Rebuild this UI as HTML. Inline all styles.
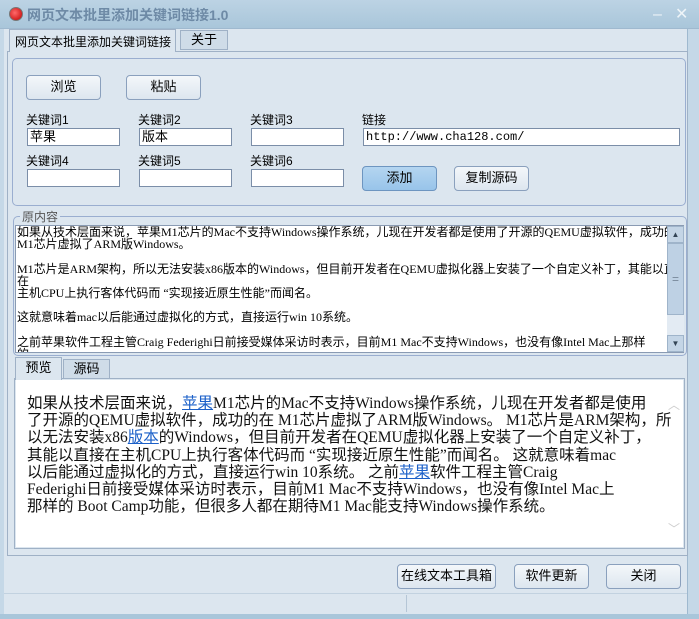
<!DOCTYPE html>
<html><head><meta charset="utf-8"><style>
*{box-sizing:border-box;margin:0;padding:0}
body{width:699px;height:619px;overflow:hidden;background:#dce6ef;font-family:"Liberation Sans","Noto Sans CJK SC",sans-serif;font-size:12px;color:#000;position:relative}
.a{position:absolute}
.btn{position:absolute;border:1px solid #8aa0bd;border-radius:4px;background:linear-gradient(#f4f7fa,#dde6ef);text-align:center;font-size:13px;line-height:22px}
.inp{position:absolute;background:#fff;border:1px solid #7b8ea8;height:18px;font-size:13px;line-height:16px;padding-left:2px}
.lbl{position:absolute;font-size:12px}
.ser{font-family:"Liberation Serif","Noto Sans CJK SC",serif}
.mono{font-family:"Liberation Mono","Noto Sans CJK SC",monospace}
.l{white-space:nowrap}
</style></head><body>
<div class="a" style="left:0;top:0;width:699px;height:29px;background:linear-gradient(#bcd3e4,#a9c6da);border-bottom:1px solid #9fb9cf"></div>
<div class="a" style="left:9px;top:7px;width:14px;height:14px;border-radius:50%;background:radial-gradient(circle at 40% 40%,#ff6a6a,#c00000);border:1px solid #777"></div>
<div class="a" style="left:27px;top:5px;font-size:14px;font-weight:bold;color:#6e8aa6">网页文本批里添加关键词链接1.0</div>
<div class="a" style="left:653px;top:6px;color:#eef4f8;font-size:16px">–</div>
<div class="a" style="left:675px;top:4px;color:#eef4f8;font-size:16px">✕</div>
<div class="a" style="left:687px;top:29px;width:12px;height:590px;background:#c5d8e7;border-left:1px solid #9fb9cf"></div>
<div class="a" style="left:0;top:29px;width:4px;height:590px;background:#c5d8e7"></div>
<div class="a l" style="left:9px;top:29px;width:167px;height:23px;background:#dce6ef;border:1px solid #9fb1c6;border-bottom:none;font-size:12px;padding:3px 0 0 5px;z-index:2">网页文本批里添加关键词链接</div>
<div class="a" style="left:180px;top:30px;width:48px;height:20px;background:#cfdce8;border:1px solid #9fb1c6;text-align:center;font-size:13px;line-height:18px">关于</div>
<div class="a" style="left:7px;top:51px;width:681px;height:505px;border:1px solid #9fb1c6"></div>
<div class="a" style="left:12px;top:58px;width:674px;height:148px;border:1px solid #9aaed0;border-radius:5px"></div>
<div class="btn" style="left:26px;top:75px;width:75px;height:25px">浏览</div>
<div class="btn" style="left:126px;top:75px;width:75px;height:25px">粘贴</div>
<div class="lbl" style="left:26px;top:111px">关键词1</div>
<div class="lbl" style="left:138px;top:111px">关键词2</div>
<div class="lbl" style="left:250px;top:111px">关键词3</div>
<div class="lbl" style="left:362px;top:111px">链接</div>
<div class="inp" style="left:27px;top:128px;width:93px">苹果</div>
<div class="inp" style="left:139px;top:128px;width:93px">版本</div>
<div class="inp" style="left:251px;top:128px;width:93px"></div>
<div class="inp mono" style="left:363px;top:128px;width:317px;font-size:12px">http://www.cha128.com/</div>
<div class="lbl" style="left:26px;top:152px">关键词4</div>
<div class="lbl" style="left:138px;top:152px">关键词5</div>
<div class="lbl" style="left:250px;top:152px">关键词6</div>
<div class="inp" style="left:27px;top:169px;width:93px"></div>
<div class="inp" style="left:139px;top:169px;width:93px"></div>
<div class="inp" style="left:251px;top:169px;width:93px"></div>
<div class="btn" style="left:362px;top:166px;width:75px;height:25px;background:linear-gradient(#b4d5f0,#98c4ea);border-color:#6d95c0">添加</div>
<div class="btn" style="left:454px;top:166px;width:75px;height:25px">复制源码</div>
<div class="a" style="left:13px;top:216px;width:674px;height:140px;border:1px solid #9aaed0;border-radius:5px"></div>
<div class="a" style="left:20px;top:208px;background:#dce6ef;padding:0 2px;color:#555;font-size:12px">原内容</div>
<div class="a" style="left:15px;top:225px;width:669px;height:128px;background:#fff;border:1px solid #8a9bb3;overflow:hidden"></div>
<div class="a ser" style="left:17px;top:226px;width:650px;height:126px;overflow:hidden;font-size:12px;line-height:12.2px">
<div class="l">如果从技术层面来说，苹果M1芯片的Mac不支持Windows操作系统，儿现在开发者都是使用了开源的QEMU虚拟软件，成功的在</div>
<div class="l">M1芯片虚拟了ARM版Windows。</div>
<div class="l">&nbsp;</div>
<div class="l">M1芯片是ARM架构，所以无法安装x86版本的Windows，但目前开发者在QEMU虚拟化器上安装了一个自定义补丁，其能以直接</div>
<div class="l">在</div>
<div class="l">主机CPU上执行客体代码而 “实现接近原生性能”而闻名。</div>
<div class="l">&nbsp;</div>
<div class="l">这就意味着mac以后能通过虚拟化的方式，直接运行win 10系统。</div>
<div class="l">&nbsp;</div>
<div class="l">之前苹果软件工程主管Craig Federighi日前接受媒体采访时表示，目前M1 Mac不支持Windows，也没有像Intel Mac上那样</div>
<div class="l">的</div>
</div>
<div class="a" style="left:667px;top:226px;width:17px;height:126px;background:#e3ebf3"></div>
<div class="a" style="left:667px;top:226px;width:17px;height:17px;background:#c4d5e6;border:1px solid #9fb4ca;font-size:8px;text-align:center;line-height:15px;color:#345">▲</div>
<div class="a" style="left:667px;top:243px;width:17px;height:72px;background:#bed1e4;border:1px solid #9fb4ca;text-align:center;line-height:70px;color:#789">=</div>
<div class="a" style="left:667px;top:335px;width:17px;height:17px;background:#c4d5e6;border:1px solid #9fb4ca;font-size:8px;text-align:center;line-height:15px;color:#345">▼</div>
<div class="a" style="left:15px;top:357px;width:47px;height:23px;background:#dce6ef;border:1px solid #9fb1c6;border-bottom:none;text-align:center;font-size:13px;line-height:20px;z-index:2">预览</div>
<div class="a" style="left:63px;top:359px;width:47px;height:20px;background:#cfdce8;border:1px solid #9fb1c6;text-align:center;font-size:13px;line-height:18px">源码</div>
<div class="a" style="left:14px;top:378px;width:671px;height:171px;border:1px solid #9fb1c6"></div>
<div class="a" style="left:16px;top:380px;width:667px;height:167px;background:#fff"></div>
<div class="a ser" style="left:27px;top:395px;width:640px;font-size:15.5px;line-height:17.2px;color:#111">
<div class="l">如果从技术层面来说，<span style="color:#1a5fc8;text-decoration:underline">苹果</span>M1芯片的Mac不支持Windows操作系统，儿现在开发者都是使用</div>
<div class="l">了开源的QEMU虚拟软件，成功的在 M1芯片虚拟了ARM版Windows。 M1芯片是ARM架构，所</div>
<div class="l">以无法安装x86<span style="color:#1a5fc8;text-decoration:underline">版本</span>的Windows，但目前开发者在QEMU虚拟化器上安装了一个自定义补丁，</div>
<div class="l">其能以直接在主机CPU上执行客体代码而 “实现接近原生性能”而闻名。 这就意味着mac</div>
<div class="l">以后能通过虚拟化的方式，直接运行win 10系统。 之前<span style="color:#1a5fc8;text-decoration:underline">苹果</span>软件工程主管Craig</div>
<div class="l">Federighi日前接受媒体采访时表示，目前M1 Mac不支持Windows，也没有像Intel Mac上</div>
<div class="l">那样的 Boot Camp功能，但很多人都在期待M1 Mac能支持Windows操作系统。</div>
</div>
<div class="a" style="left:668px;top:396px;color:#ccc;font-size:12px">︿</div>
<div class="a" style="left:668px;top:520px;color:#ccc;font-size:12px">﹀</div>
<div class="btn" style="left:397px;top:564px;width:99px;height:25px">在线文本工具箱</div>
<div class="btn" style="left:514px;top:564px;width:75px;height:25px">软件更新</div>
<div class="btn" style="left:606px;top:564px;width:75px;height:25px">关闭</div>
<div class="a" style="left:4px;top:593px;width:683px;height:1px;background:#c2d2e0"></div>
<div class="a" style="left:406px;top:595px;width:1px;height:17px;background:#b5c6d6"></div>
<div class="a" style="left:0;top:614px;width:699px;height:5px;background:#a9c6da"></div>
</body></html>
